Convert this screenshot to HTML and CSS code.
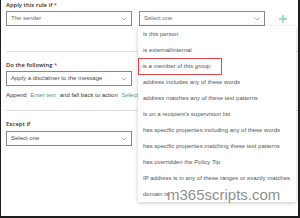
FILE: index.html
```html
<!DOCTYPE html>
<html lang="en">
<head>
<meta charset="utf-8">
<title>Rule conditions</title>
<link rel="stylesheet" href="styles.css">
</head>
<body>
<div class="frame">
  <section class="block">
    <div class="label">Apply this rule if <span class="req">*</span></div>
    <div class="row">
      <div class="select"><span class="value">The sender</span><svg class="chev" viewBox="0 0 6 4"><path d="M0.5 0.5 L3 3 L5.5 0.5"/></svg></div>
      <div class="select"><span class="value">Select one</span><svg class="chev" viewBox="0 0 6 4"><path d="M0.5 0.5 L3 3 L5.5 0.5"/></svg></div>
      <svg class="plus" viewBox="0 0 8 8"><path d="M4 0 V8 M0 4 H8"/></svg>
    </div>
  </section>
  <div class="divider first"></div>
  <section class="block">
    <div class="label">Do the following <span class="req">*</span></div>
    <div class="row">
      <div class="select"><span class="value dark">Apply a disclaimer to the message</span><svg class="chev" viewBox="0 0 6 4"><path d="M0.5 0.5 L3 3 L5.5 0.5"/></svg></div>
    </div>
    <div class="append">Append <span class="link">Enter text</span> and fall back to action <span class="link">Select one</span></div>
  </section>
  <div class="divider second"></div>
  <section class="block">
    <div class="label">Except if</div>
    <div class="row except">
      <div class="select"><span class="value dark">Select one</span><svg class="chev" viewBox="0 0 6 4"><path d="M0.5 0.5 L3 3 L5.5 0.5"/></svg></div>
      <div class="select ghost"></div>
      <span class="tick"></span>
    </div>
  </section>

  <ul class="menu">
    <li>is this person</li>
    <li>is external/internal</li>
    <li class="picked">is a member of this group:</li>
    <li>address includes any of these words</li>
    <li>address matches any of these text patterns</li>
    <li>is on a recipient's supervision list</li>
    <li>has specific properties including any of these words</li>
    <li>has specific properties matching these text patterns</li>
    <li>has overridden the Policy Tip</li>
    <li>IP address is in any of these ranges or exactly matches</li>
    <li>domain is</li>
  </ul>
  <div class="watermark">m365scripts.com</div>
</div>
</body>
</html>
```
FILE: styles.css
```css
html, body {
  margin: 0;
  padding: 0;
  background: #ffffff;
}
.frame {
  position: relative;
  width: 300px;
  height: 218px;
  box-sizing: border-box;
  border-left: 1px solid #1e1e1e;
  border-right: 2px solid #1e1e1e;
  border-bottom: 2px solid #1e1e1e;
  padding: 0 0 0 5px;
  overflow: hidden;
  font-family: "Liberation Sans", Arial, sans-serif;
  font-size: 6px;
  color: #555555;
}
.block {
  display: flex;
  flex-direction: column;
}
.label {
  height: 10px;
  line-height: 10px;
  font-family: "Open Sans", "Liberation Sans", sans-serif;
  font-weight: 600;
  font-size: 5.9px;
  color: #323130;
}
.req {
  color: #c4314b;
}
.row {
  display: flex;
  align-items: center;
  gap: 7px;
  margin-top: 1px;
}
.select {
  width: 126px;
  height: 15px;
  box-sizing: border-box;
  border: 1px solid #8a8886;
  display: flex;
  align-items: center;
  justify-content: space-between;
  padding: 0 4px 0 4px;
}
.value {
  color: #6b6b6b;
  line-height: 13px;
}
.value.dark {
  color: #4a4a4a;
}
.chev {
  width: 6px;
  height: 4px;
  fill: none;
  stroke: #9a9a9a;
  stroke-width: 0.8;
}
.plus {
  width: 8px;
  height: 8px;
  margin-left: 7px;
  stroke: #7fd0b8;
  stroke-width: 1.4;
  fill: none;
}
.divider {
  height: 1px;
  background: #e1dfdd;
  margin-right: 0;
}
.divider.first {
  margin-top: 25px;
  margin-bottom: 8px;
}
.append {
  margin-top: 4px;
  width: 132px;
  height: 10px;
  line-height: 10px;
  color: #3b3a39;
  white-space: nowrap;
  overflow: hidden;
}
.link {
  color: #3a9e86;
  margin: 0 2px;
}
.divider.second {
  margin-top: 10px;
  margin-bottom: 8px;
}
.row.except {
  margin-top: 2px;
}
.ghost {
  border-color: #8a8886;
}
.tick {
  width: 1px;
  height: 7px;
  background: #7fd0b8;
  margin-left: 22px;
}
.menu {
  position: absolute;
  left: 137px;
  top: 26px;
  width: 158px;
  margin: 0;
  padding: 0;
  list-style: none;
  background: #ffffff;
  box-shadow: 0 1px 4px rgba(0, 0, 0, 0.22);
}
.menu li {
  height: 16px;
  line-height: 16px;
  padding-left: 5px;
  color: #555555;
  white-space: nowrap;
}
.menu li.picked {
  width: 84px;
  box-sizing: border-box;
  border: 1.5px solid #e0474f;
  padding-left: 3.5px;
  line-height: 14px;
  height: 17px;
  margin-bottom: -1px;
}
.watermark {
  position: absolute;
  left: 166px;
  top: 186px;
  font-family: "Liberation Sans", Arial, sans-serif;
  font-size: 15px;
  line-height: 17px;
  color: rgba(120, 120, 120, 0.85);
  letter-spacing: 0;
}
```
